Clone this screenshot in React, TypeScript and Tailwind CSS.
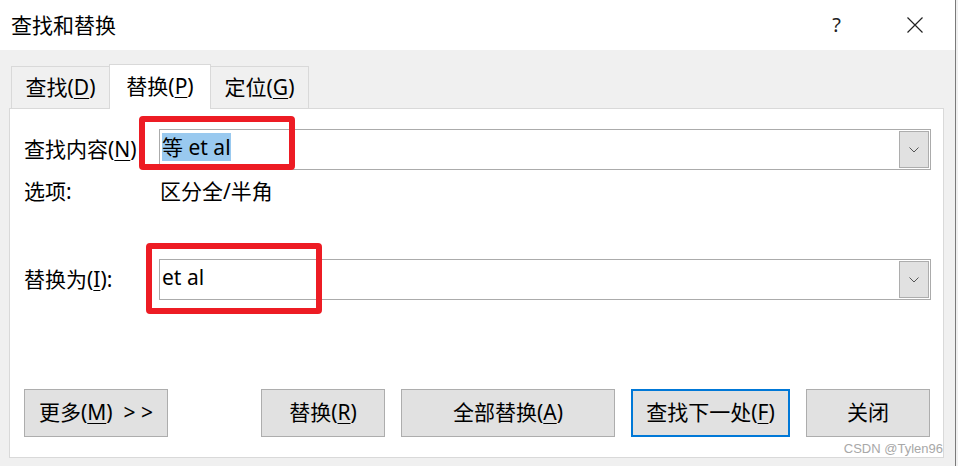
import React from 'react';

const FONT = { fontFamily: '"Noto Sans", "Noto Sans CJK SC", sans-serif' };

const U: React.FC<{ children: React.ReactNode }> = ({ children }) => (
  <span className="underline underline-offset-[3px] decoration-1">{children}</span>
);

const Chevron: React.FC = () => (
  <svg width="10" height="6" viewBox="0 0 10 6" className="text-[#555]">
    <path d="M0.5 0.5 L5 5 L9.5 0.5" fill="none" stroke="currentColor" strokeWidth="1" />
  </svg>
);

interface ComboProps {
  value: string;
  selected?: boolean;
}

const Combo: React.FC<ComboProps> = ({ value, selected }) => (
  <div className="w-[772px] h-[41px] border border-[#ababab] bg-white flex items-start justify-between">
    <div className="pl-[2px] pt-[2px] text-[21px] text-black">
      <span className={`inline-block h-[28px] leading-[28px] ${selected ? 'bg-[#99c9ef]' : ''}`}>{value}</span>
    </div>
    <div className="mt-[1px] mr-[1px] w-[30px] h-[37px] bg-[#e1e1e1] border border-[#adadad] flex items-center justify-center">
      <Chevron />
    </div>
  </div>
);

const Button: React.FC<{ width: string; focused?: boolean; children: React.ReactNode }> = ({ width, focused, children }) => (
  <button
    className={`${width} h-[48px] bg-[#e1e1e1] text-[21px] text-black flex items-center justify-center ${
      focused ? 'border-2 border-[#0078d7]' : 'border border-[#adadad]'
    }`}
  >
    {children}
  </button>
);

const App: React.FC = () => {
  return (
    <div className="w-[958px] h-[466px] bg-[#f0f0f0] flex overflow-hidden" style={FONT}>
      <div className="relative w-[955px] h-full flex flex-col">
        {/* title bar */}
        <div className="h-[50px] bg-white flex items-center justify-between pl-[11px] shrink-0">
          <span className="text-[21px] text-black leading-none">查找和替换</span>
          <div className="flex items-center">
            <span className="text-[20px] text-[#222] leading-none mr-[66px]">?</span>
            <svg width="16" height="16" viewBox="0 0 16 16" className="mr-[32px]">
              <path d="M0.5 0.5 L15.5 15.5 M15.5 0.5 L0.5 15.5" stroke="#222" strokeWidth="1.2" />
            </svg>
          </div>
        </div>

        {/* tabs */}
        <div className="flex items-end pl-[11px] mt-[14px] h-[44px]">
          <div className="w-[98px] h-[42px] border-t border-l border-[#d9d9d9] flex items-center justify-center text-[21px] text-black">
            查找(<U>D</U>)
          </div>
          <div className="w-[102px] h-[45px] -mb-px bg-white border-t border-l border-r border-[#d9d9d9] flex items-center justify-center text-[21px] text-black relative z-10">
            替换(<U>P</U>)
          </div>
          <div className="w-[98px] h-[42px] border-t border-r border-[#d9d9d9] flex items-center justify-center text-[21px] text-black">
            定位(<U>G</U>)
          </div>
        </div>

        {/* panel */}
        <div className="ml-[9px] w-[935px] h-[350px] bg-white border border-[#d9d9d9] pl-[14px] pt-[20px] flex flex-col">
          <div className="flex items-center">
            <div className="w-[135px] text-[21px] text-black">
              查找内容(<U>N</U>)
            </div>
            <Combo value="等 et al" selected />
          </div>

          <div className="flex items-center mt-[9px] h-[26px] text-[21px] text-black">
            <div className="w-[136px]">选项:</div>
            <div>区分全/半角</div>
          </div>

          <div className="flex items-center mt-[54px]">
            <div className="w-[135px] text-[21px] text-black">
              替换为(<U>I</U>):
            </div>
            <Combo value="et al" />
          </div>

          <div className="flex items-center mt-[89px]">
            <Button width="w-[144px]">
              更多(<U>M</U>)&nbsp; &gt; &gt;
            </Button>
            <div className="w-[93px]" />
            <div className="flex gap-[16px]">
              <Button width="w-[124px]">
                替换(<U>R</U>)
              </Button>
              <Button width="w-[214px]">
                全部替换(<U>A</U>)
              </Button>
              <Button width="w-[159px]" focused>
                查找下一处(<U>F</U>)
              </Button>
              <Button width="w-[124px]">关闭</Button>
            </div>
          </div>
        </div>

        {/* annotations */}
        <div className="absolute left-[139px] top-[116px] w-[156px] h-[54px] border-[6px] border-[#ed1c24] rounded-[4px]" />
        <div className="absolute left-[146px] top-[243px] w-[176px] h-[71px] border-[6px] border-[#ed1c24] rounded-[4px]" />
        <div
          className="absolute right-[12px] top-[441px] text-[13px] leading-[16px] text-[#a8a8a8]"
          style={{ fontFamily: '"Liberation Sans", Arial, sans-serif' }}
        >
          CSDN @Tylen96
        </div>
      </div>
      <div className="w-px h-full bg-[#7a7a7a]" />
      <div className="flex-1 h-full bg-[#f0f0f0]" />
    </div>
  );
};

export default App;
